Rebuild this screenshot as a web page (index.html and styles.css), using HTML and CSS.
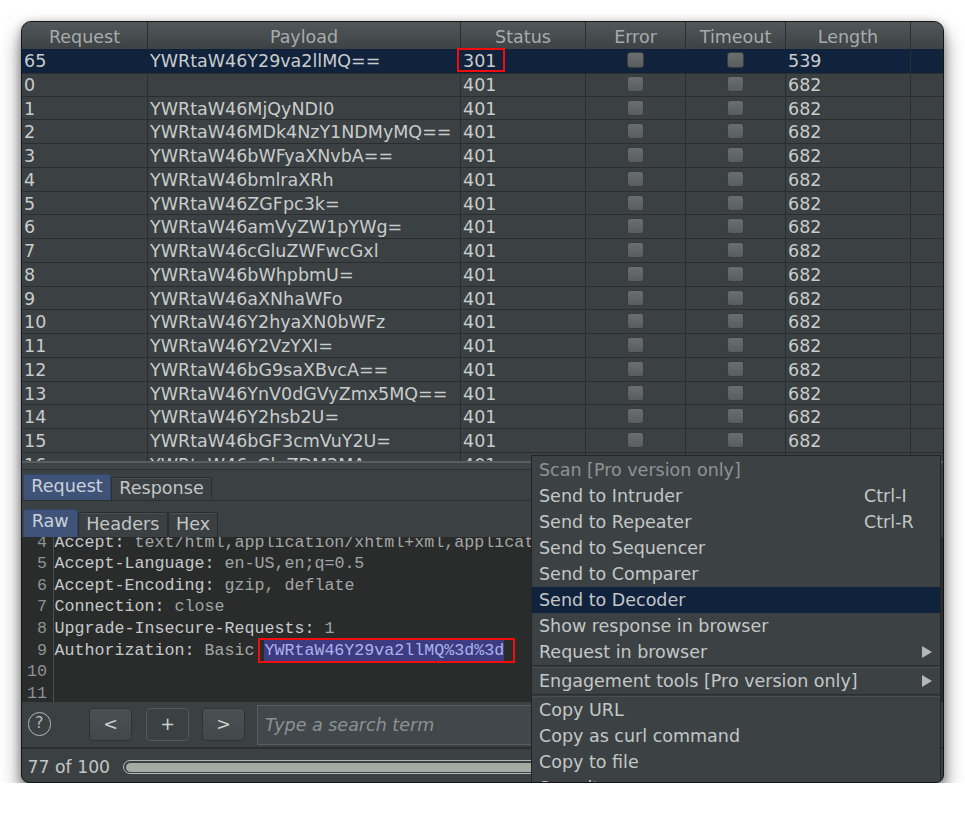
FILE: index.html
```html
<!DOCTYPE html>
<html>
<head>
<meta charset="utf-8">
<title>Intruder results</title>
<link rel="stylesheet" href="styles.css">
</head>
<body>
<div class="window">
  <div class="results">
    <div class="thead">
      <div class="th">Request</div><div class="th">Payload</div><div class="th">Status</div><div class="th">Error</div><div class="th">Timeout</div><div class="th">Length</div><div class="th"></div>
    </div>
    <div class="row selected">
      <div class="td">65</div><div class="td">YWRtaW46Y29va2llMQ==</div><div class="td status">301<span class="mark"></span></div><div class="td chk"><span class="box"></span></div><div class="td chk"><span class="box"></span></div><div class="td">539</div><div class="td"></div>
    </div>
    <div class="row"><div class="td">0</div><div class="td"></div><div class="td">401</div><div class="td chk"><span class="box"></span></div><div class="td chk"><span class="box"></span></div><div class="td">682</div><div class="td"></div></div>
    <div class="row"><div class="td">1</div><div class="td">YWRtaW46MjQyNDI0</div><div class="td">401</div><div class="td chk"><span class="box"></span></div><div class="td chk"><span class="box"></span></div><div class="td">682</div><div class="td"></div></div>
    <div class="row"><div class="td">2</div><div class="td">YWRtaW46MDk4NzY1NDMyMQ==</div><div class="td">401</div><div class="td chk"><span class="box"></span></div><div class="td chk"><span class="box"></span></div><div class="td">682</div><div class="td"></div></div>
    <div class="row"><div class="td">3</div><div class="td">YWRtaW46bWFyaXNvbA==</div><div class="td">401</div><div class="td chk"><span class="box"></span></div><div class="td chk"><span class="box"></span></div><div class="td">682</div><div class="td"></div></div>
    <div class="row"><div class="td">4</div><div class="td">YWRtaW46bmlraXRh</div><div class="td">401</div><div class="td chk"><span class="box"></span></div><div class="td chk"><span class="box"></span></div><div class="td">682</div><div class="td"></div></div>
    <div class="row"><div class="td">5</div><div class="td">YWRtaW46ZGFpc3k=</div><div class="td">401</div><div class="td chk"><span class="box"></span></div><div class="td chk"><span class="box"></span></div><div class="td">682</div><div class="td"></div></div>
    <div class="row"><div class="td">6</div><div class="td">YWRtaW46amVyZW1pYWg=</div><div class="td">401</div><div class="td chk"><span class="box"></span></div><div class="td chk"><span class="box"></span></div><div class="td">682</div><div class="td"></div></div>
    <div class="row"><div class="td">7</div><div class="td">YWRtaW46cGluZWFwcGxl</div><div class="td">401</div><div class="td chk"><span class="box"></span></div><div class="td chk"><span class="box"></span></div><div class="td">682</div><div class="td"></div></div>
    <div class="row"><div class="td">8</div><div class="td">YWRtaW46bWhpbmU=</div><div class="td">401</div><div class="td chk"><span class="box"></span></div><div class="td chk"><span class="box"></span></div><div class="td">682</div><div class="td"></div></div>
    <div class="row"><div class="td">9</div><div class="td">YWRtaW46aXNhaWFo</div><div class="td">401</div><div class="td chk"><span class="box"></span></div><div class="td chk"><span class="box"></span></div><div class="td">682</div><div class="td"></div></div>
    <div class="row"><div class="td">10</div><div class="td">YWRtaW46Y2hyaXN0bWFz</div><div class="td">401</div><div class="td chk"><span class="box"></span></div><div class="td chk"><span class="box"></span></div><div class="td">682</div><div class="td"></div></div>
    <div class="row"><div class="td">11</div><div class="td">YWRtaW46Y2VzYXI=</div><div class="td">401</div><div class="td chk"><span class="box"></span></div><div class="td chk"><span class="box"></span></div><div class="td">682</div><div class="td"></div></div>
    <div class="row"><div class="td">12</div><div class="td">YWRtaW46bG9saXBvcA==</div><div class="td">401</div><div class="td chk"><span class="box"></span></div><div class="td chk"><span class="box"></span></div><div class="td">682</div><div class="td"></div></div>
    <div class="row"><div class="td">13</div><div class="td">YWRtaW46YnV0dGVyZmx5MQ==</div><div class="td">401</div><div class="td chk"><span class="box"></span></div><div class="td chk"><span class="box"></span></div><div class="td">682</div><div class="td"></div></div>
    <div class="row"><div class="td">14</div><div class="td">YWRtaW46Y2hsb2U=</div><div class="td">401</div><div class="td chk"><span class="box"></span></div><div class="td chk"><span class="box"></span></div><div class="td">682</div><div class="td"></div></div>
    <div class="row"><div class="td">15</div><div class="td">YWRtaW46bGF3cmVuY2U=</div><div class="td">401</div><div class="td chk"><span class="box"></span></div><div class="td chk"><span class="box"></span></div><div class="td">682</div><div class="td"></div></div>
    <div class="row"><div class="td">16</div><div class="td">YWRtaW46cGluZDM2MA==</div><div class="td">401</div><div class="td chk"><span class="box"></span></div><div class="td chk"><span class="box"></span></div><div class="td">682</div><div class="td"></div></div>
  </div>

  <div class="splitter"></div>

  <div class="tabs">
    <div class="tab active w-request">Request</div>
    <div class="tab w-response">Response</div>
  </div>
  <div class="tabs subtabs">
    <div class="tab active w-raw">Raw</div>
    <div class="tab w-headers">Headers</div>
    <div class="tab w-hex">Hex</div>
  </div>

  <div class="editor">
    <div class="gutter">
      <div class="lines">
        <div>4</div><div>5</div><div>6</div><div>7</div><div>8</div><div>9</div><div>10</div><div>11</div>
      </div>
    </div>
    <div class="code">
      <div class="lines">
        <div class="line"><span class="k">Accept:</span> text/html,application/xhtml+xml,application/xml;q=0.9,*/*;q=0.8</div>
        <div class="line"><span class="k">Accept-Language:</span> en-US,en;q=0.5</div>
        <div class="line"><span class="k">Accept-Encoding:</span> gzip, deflate</div>
        <div class="line"><span class="k">Connection:</span> close</div>
        <div class="line"><span class="k">Upgrade-Insecure-Requests:</span> 1</div>
        <div class="line"><span class="k">Authorization:</span> Basic <span class="sel">YWRtaW46Y29va2llMQ%3d%3d</span></div>
        <div class="line">&nbsp;</div>
        <div class="line">&nbsp;</div>
      </div>
    </div>
  </div>

  <div class="toolbar">
    <div class="help">?</div>
    <div class="btn nav first">&lt;</div>
    <div class="btn plus">+</div>
    <div class="btn nav">&gt;</div>
    <div class="search">Type a search term</div>
  </div>

  <div class="statusbar">
    <div class="count">77 of 100</div>
    <div class="progress"><div class="fill"></div></div>
  </div>

  <div class="menu">
    <div class="item disabled"><span>Scan [Pro version only]</span><span></span><span></span></div>
    <div class="item"><span>Send to Intruder</span><span>Ctrl-I</span><span></span></div>
    <div class="item"><span>Send to Repeater</span><span>Ctrl-R</span><span></span></div>
    <div class="item"><span>Send to Sequencer</span><span></span><span></span></div>
    <div class="item"><span>Send to Comparer</span><span></span><span></span></div>
    <div class="item hover"><span>Send to Decoder</span><span></span><span></span></div>
    <div class="item"><span>Show response in browser</span><span></span><span></span></div>
    <div class="item"><span>Request in browser</span><span></span><span class="arrow"></span></div>
    <div class="sep"></div>
    <div class="item"><span>Engagement tools [Pro version only]</span><span></span><span class="arrow"></span></div>
    <div class="sep"></div>
    <div class="item"><span>Copy URL</span><span></span><span></span></div>
    <div class="item"><span>Copy as curl command</span><span></span><span></span></div>
    <div class="item"><span>Copy to file</span><span></span><span></span></div>
    <div class="item"><span>Save item</span><span></span><span></span></div>
  </div>
</div>
</body>
</html>
```

FILE: styles.css
```css
* { box-sizing: border-box; }

body {
  margin: 0;
  background: #ffffff;
  font-family: "DejaVu Sans", "Noto Sans", sans-serif;
}

.window {
  position: relative;
  margin: 21px 0 0 21px;
  width: 923px;
  height: 762px;
  border: 1px solid #141616;
  border-radius: 10px 10px 8px 8px;
  overflow: hidden;
  background: #3b4143;
  display: flex;
  flex-direction: column;
  box-shadow: 0 12px 20px rgba(0, 0, 0, 0.5), 0 2px 9px rgba(0, 0, 0, 0.3);
}

/* ---------- results table ---------- */
.results {
  flex: none;
  height: 439px;
  overflow: hidden;
  background: #3b4042;
}

.thead,
.row {
  display: grid;
  grid-template-columns: 126px 313px 125px 100px 100px 125px 1fr;
}

.thead {
  height: 27px;
  background: linear-gradient(#51575a, #3d4244);
}

.th {
  color: #a7abac;
  font-size: 17.5px;
  line-height: 24px;
  padding-top: 3px;
  text-align: center;
  border-right: 1px solid #2b2f30;
  white-space: nowrap;
}

.th:last-child { border-right: 0; }

.row { height: 23.75px; }

.td {
  border-right: 1px solid #2a2e2f;
  border-bottom: 1px solid #2a2e2f;
  color: #c9cccc;
  font-size: 17.5px;
  line-height: 22.75px;
  padding: 1px 0 0 2px;
  white-space: nowrap;
  overflow: hidden;
}

.td:last-child { border-right: 0; }

.row.selected { background: #11233c; }
.row.selected .td:nth-child(-n+5) { border-right-color: #11233c; }

.td.status {
  position: relative;
  overflow: visible;
}

.mark {
  position: absolute;
  left: -4px;
  top: -1.5px;
  width: 47.5px;
  height: 24.5px;
  border: 2px solid #f20c0c;
}

.td.chk { padding: 0; }

.box {
  display: block;
  width: 17px;
  height: 16px;
  margin: 3px auto 0;
  border-radius: 3px;
  border: 1px solid #3a3d3e;
  background: linear-gradient(#6b6e6f, #5a5d5e);
}

/* ---------- splitter & tabs ---------- */
.splitter {
  flex: none;
  height: 9px;
  border-top: 2px solid #585d5f;
  border-bottom: 1px solid #2c3031;
  background: #3e4446;
}

.tabs {
  flex: none;
  height: 31px;
  display: flex;
  align-items: flex-end;
  padding-left: 1px;
  border-bottom: 1px solid #2b2f30;
}

.subtabs {
  height: 36px;
  border-bottom: 0;
}

.tab {
  height: 23px;
  line-height: 21px;
  font-size: 17.6px;
  color: #c3c6c6;
  text-align: center;
  background: #3b4143;
  border: 1px solid #2a2e2f;
  border-bottom: 0;
  border-radius: 3px 3px 0 0;
  box-shadow: inset 0 1px 0 #4a5052;
  white-space: nowrap;
}

.tab.active {
  height: 26px;
  line-height: 22px;
  background: #3f5378;
  border-color: #33456a;
  color: #cad0da;
  box-shadow: none;
}

.subtabs .tab { height: 25.5px; line-height: 23px; }
.subtabs .tab.active { height: 28px; line-height: 23px; }

.w-request { width: 88px; }
.w-response { width: 101px; }
.w-raw { width: 54.5px; }
.w-headers { width: 90.5px; }
.w-hex { width: 50px; }

/* ---------- editor ---------- */
.editor {
  flex: none;
  height: 165px;
  display: grid;
  grid-template-columns: 32px 1fr;
  background: #2a2c2c;
  overflow: hidden;
  font-family: "Liberation Mono", "DejaVu Sans Mono", monospace;
  font-size: 16.67px;
}

.lines {
  margin-top: -5.4px;
  line-height: 21.6px;
}

.gutter {
  border-right: 1px solid #4b4f50;
  text-align: right;
  padding-right: 6px;
  color: #8f9292;
}

.code {
  padding-left: 0.5px;
  color: #a3a5a5;
  overflow: hidden;
}

.line {
  height: 21.6px;
  white-space: pre;
}

.k { color: #c6c8c8; }

.sel {
  position: relative;
  display: inline-block;
  background: #3d3b82;
  color: #a9b3ea;
}

.sel::after {
  content: "";
  position: absolute;
  left: -6px;
  right: -11px;
  top: -2px;
  bottom: -2px;
  border: 2px solid #f20c0c;
}

/* ---------- toolbar ---------- */
.toolbar {
  flex: none;
  height: 47px;
  display: flex;
  align-items: center;
  border-bottom: 2px solid #2a2e2f;
  font-size: 17.5px;
}

.help {
  width: 23.5px;
  height: 23.5px;
  margin-left: 5.5px;
  margin-top: -1px;
  border: 1.5px solid #b3b7b7;
  border-radius: 50%;
  color: #b3b7b7;
  font-size: 16px;
  line-height: 20px;
  text-align: center;
}

.btn {
  width: 43px;
  height: 33px;
  margin-left: 14px;
  border-radius: 4px;
  border: 1px solid #53585a;
  color: #cdd0d0;
  text-align: center;
  line-height: 30px;
}

.btn.first { margin-left: 38px; }

.btn.nav {
  background: linear-gradient(#4b5153, #42484a);
  border-color: #2f3335;
}

.btn.plus {
  background: #3b4143;
  margin-left: 14px;
  margin-right: -1px;
}

.search {
  flex: 1;
  height: 40px;
  margin-left: 12px;
  margin-right: 6px;
  padding-left: 7px;
  background: #41474a;
  border: 1px solid #595e60;
  color: #8d9293;
  font-style: italic;
  line-height: 38px;
}

/* ---------- status bar ---------- */
.statusbar {
  flex: 1;
  display: flex;
  align-items: center;
  padding: 3px 8px 0 5.5px;
  font-size: 17.3px;
  color: #c3c6c6;
}

.count { white-space: nowrap; }

.progress {
  flex: 1;
  height: 14px;
  margin-left: 13px;
  padding: 1.5px;
  border: 1.5px solid #b4b9b4;
  border-radius: 7px;
  background: #3b4143;
}

.fill {
  width: 77%;
  height: 100%;
  border-radius: 5px;
  background: #a4aaa4;
}

/* ---------- context menu ---------- */
.menu {
  position: absolute;
  left: 509px;
  top: 433px;
  width: 410px;
  height: 340px;
  padding-top: 1px;
  background: #3c4244;
  border: 1px solid #222526;
  font-size: 17.5px;
  color: #c4c7c7;
}

.item {
  height: 26px;
  line-height: 26px;
  display: grid;
  grid-template-columns: 1fr 58px 10px;
  padding: 0 8px 0 7px;
  white-space: nowrap;
}

.item.disabled { color: #8f9393; }
.item.hover { background: #11233c; }

.arrow {
  width: 0;
  height: 0;
  margin-top: 7px;
  border-top: 6px solid transparent;
  border-bottom: 6px solid transparent;
  border-left: 10px solid #b3b7b7;
}

.sep {
  height: 3px;
  background: #33383a;
  border-top: 1px solid #2a2e2f;
  border-bottom: 1px solid #4a5052;
}
```
